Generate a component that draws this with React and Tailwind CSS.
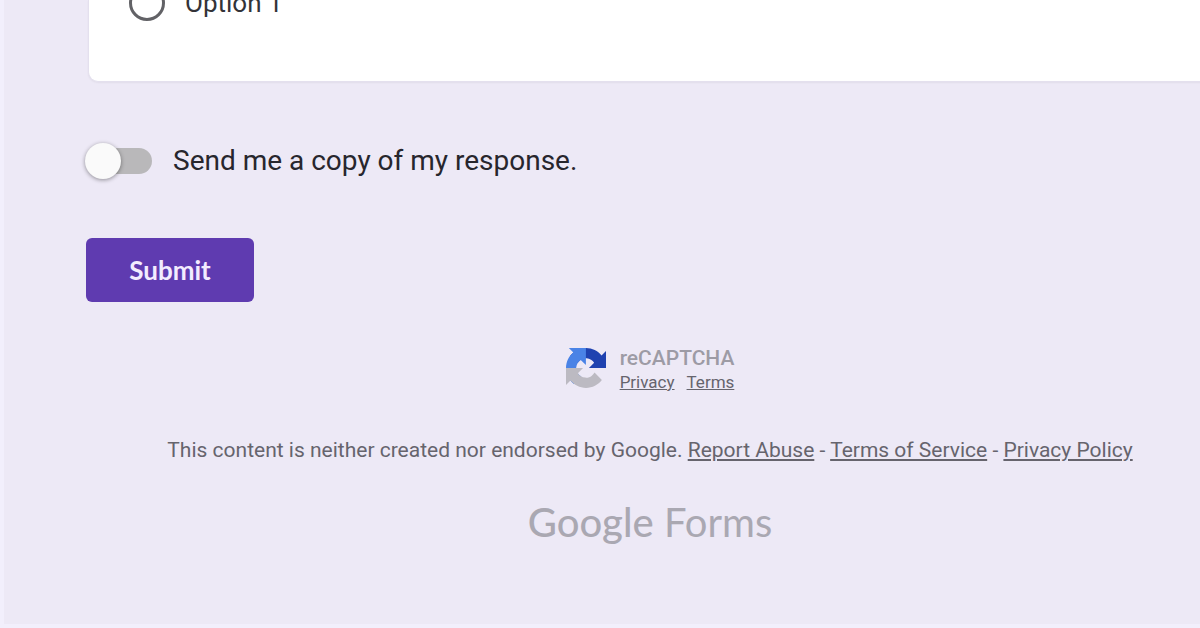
function RecaptchaLogo() {
  return (
    <svg className="size-10 shrink-0" viewBox="0 0 64 64" aria-hidden="true">
      <path
        d="M64 31.955l-.012-1.374V4.687l-7.160 7.160C50.968 4.674 42.051.093 32.067.093c-10.390 0-19.622 4.960-25.458 12.640l11.736 11.860a15.550 15.550 0 0 1 4.754-5.334c2.050-1.600 4.952-2.906 8.968-2.906.485 0 .860.057 1.135.163 4.976.393 9.288 3.140 11.828 7.124l-8.307 8.307L64 31.953"
        fill="#1f42b0"
      />
      <path
        d="M31.862.094l-1.374.013H4.594l7.160 7.160C4.580 13.127 0 22.044 0 32.028c0 10.390 4.960 19.622 12.640 25.458l11.860-11.736a15.550 15.550 0 0 1-5.334-4.754c-1.600-2.050-2.906-4.952-2.906-8.968 0-.485.057-.860.163-1.135.393-4.976 3.140-9.288 7.124-11.828l8.307 8.307L31.860.095"
        fill="#4a83e6"
      />
      <path
        d="M.001 31.955l.013 1.374v25.894l7.160-7.160c5.860 7.173 14.774 11.754 24.758 11.754 10.390 0 19.622-4.960 25.458-12.640L45.654 39.317a15.550 15.550 0 0 1-4.754 5.334c-2.050 1.600-4.952 2.906-8.968 2.906-.485 0-.860-.057-1.135-.163-4.976-.393-9.288-3.140-11.828-7.124l8.307-8.307z"
        fill="#bcbac2"
      />
    </svg>
  );
}

export default function App() {
  return (
    <div className="min-h-screen overflow-hidden border-b-4 border-l-4 border-[#f2effc] bg-[#ede9f6] font-[Roboto,sans-serif]">
      <main className="-mr-3 flex flex-col pl-[84px]">
        <section className="flex flex-col rounded-b-[10px] border border-t-0 border-[#e4e0ee] bg-white pb-[60px] pl-10 shadow-xs">
          <label className="-mt-[15px] flex items-center gap-5 text-[26px] leading-9 text-[#333338]">
            <input
              type="radio"
              name="option"
              className="size-9 appearance-none rounded-full border-[3px] border-[#626266] bg-white"
            />
            Option 1
          </label>
        </section>

        <form className="flex flex-col items-start" onSubmit={(event) => event.preventDefault()}>
          <label className="mt-[59px] flex items-center gap-5 text-[28px] leading-10 text-[#27262d]">
            <span className="relative -ml-[3px] flex h-9 w-[68px] items-center">
              <input
                type="checkbox"
                role="switch"
                className="peer ml-2 h-[26px] w-[59px] appearance-none rounded-full bg-[#b9b8ba] checked:bg-[#b9a7e0]"
              />
              <span className="pointer-events-none absolute left-0 size-9 rounded-full bg-[#fafafa] shadow-[0_1px_4px_rgba(0,0,0,0.4)] peer-checked:translate-x-8 peer-checked:bg-[#5f3bb0]" />
            </span>
            Send me a copy of my response.
          </label>
          <button
            type="submit"
            className="-ml-0.5 mt-[57px] h-16 w-[168px] rounded-[6px] bg-[#5f3bb0] font-[Lato,sans-serif] text-[26px] font-bold text-[#f3ecff]"
          >
            Submit
          </button>
        </form>

        <footer className="flex flex-col items-center text-[#66646d]">
          <div className="mt-10 flex items-center gap-[14px]">
            <RecaptchaLogo />
            <div className="pt-1">
              <p className="text-[21px] font-medium leading-6 text-[#9d9ba5]">reCAPTCHA</p>
              <p className="flex gap-3 text-[17px] leading-6">
                <a href="#privacy" className="underline">Privacy</a>
                <a href="#terms" className="underline">Terms</a>
              </p>
            </div>
          </div>
          <p className="mt-10 whitespace-nowrap text-[21px] leading-8">
            This content is neither created nor endorsed by Google.{" "}
            <a href="#report" className="underline">Report Abuse</a> -{" "}
            <a href="#tos" className="underline">Terms of Service</a> -{" "}
            <a href="#policy" className="underline">Privacy Policy</a>
          </p>
          <a
            href="#forms"
            className="mt-8 font-[Lato,sans-serif] text-[40px] leading-[48px] text-[#aaa8b2]"
          >
            <span className="font-medium">Google</span> Forms
          </a>
        </footer>
      </main>
    </div>
  );
}
